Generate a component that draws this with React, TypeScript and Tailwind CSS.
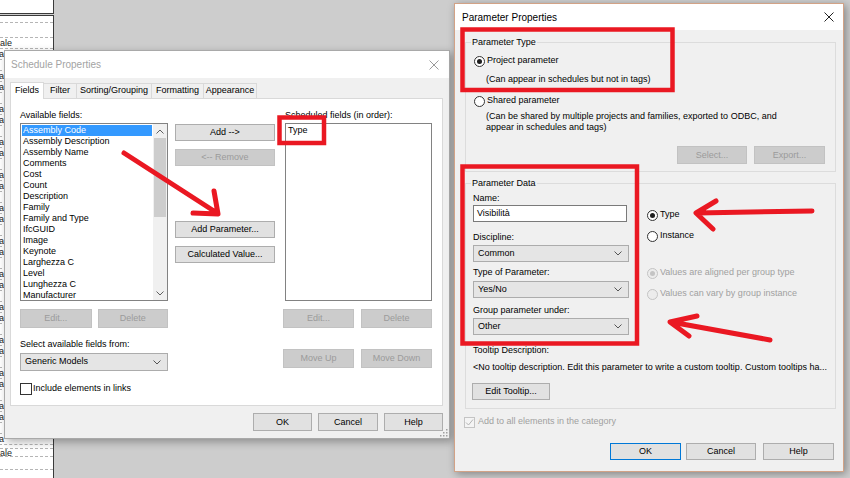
import React from "react";

const availableFields = [
  "Assembly Code",
  "Assembly Description",
  "Assembly Name",
  "Comments",
  "Cost",
  "Count",
  "Description",
  "Family",
  "Family and Type",
  "IfcGUID",
  "Image",
  "Keynote",
  "Larghezza C",
  "Level",
  "Lunghezza C",
  "Manufacturer",
];

const stripRows = Array.from({ length: 36 }, (_, i) => i);

function CloseIcon({ color }: { color: string }) {
  return (
    <svg width="10" height="10" viewBox="0 0 10 10">
      <path d="M0.5 0.5 L9.5 9.5 M9.5 0.5 L0.5 9.5" stroke={color} strokeWidth="1" fill="none" />
    </svg>
  );
}

function ChevronDown({ color = "#555" }: { color?: string }) {
  return (
    <svg width="8" height="5" viewBox="0 0 8 5">
      <path d="M0.5 0.5 L4 4 L7.5 0.5" fill="none" stroke={color} strokeWidth="1" />
    </svg>
  );
}

function ChevronUp({ color = "#555" }: { color?: string }) {
  return (
    <svg width="8" height="5" viewBox="0 0 8 5">
      <path d="M0.5 4.5 L4 1 L7.5 4.5" fill="none" stroke={color} strokeWidth="1" />
    </svg>
  );
}

function Btn({
  label,
  className = "",
  disabled = false,
  focused = false,
}: {
  label: string;
  className?: string;
  disabled?: boolean;
  focused?: boolean;
}) {
  const tone = disabled
    ? "bg-[#cccccc] border-[#c2c2c2] text-[#9b9b9b]"
    : focused
    ? "bg-[#e1e1e1] border-[#0078d7] text-black"
    : "bg-[#e1e1e1] border-[#adadad] text-black";
  return (
    <button type="button" className={`flex items-center justify-center border leading-none ${tone} ${className}`}>
      {label}
    </button>
  );
}

function Select({ value, className = "" }: { value: string; className?: string }) {
  return (
    <div className={`flex items-center justify-between border border-[#acacac] bg-[#e5e5e5] pl-[4px] pr-[6px] ${className}`}>
      <span>{value}</span>
      <ChevronDown />
    </div>
  );
}

function Radio({ checked = false, disabled = false }: { checked?: boolean; disabled?: boolean }) {
  return (
    <span
      className={`w-[11px] h-[11px] shrink-0 rounded-full border flex items-center justify-center ${
        disabled ? "border-[#c4c4c4] bg-[#ececec]" : "border-[#333333] bg-white"
      }`}
    >
      {checked && <span className={`w-[5px] h-[5px] rounded-full ${disabled ? "bg-[#c4c4c4]" : "bg-[#1e1e1e]"}`} />}
    </span>
  );
}

function RadioRow({
  label,
  checked = false,
  disabled = false,
  className = "",
}: {
  label: string;
  checked?: boolean;
  disabled?: boolean;
  className?: string;
}) {
  return (
    <div className={`h-[12px] flex items-center gap-[2px] whitespace-nowrap ${disabled ? "text-[#a0a0a0]" : "text-black"} ${className}`}>
      <Radio checked={checked} disabled={disabled} />
      <span>{label}</span>
    </div>
  );
}

function ScheduleDialog() {
  return (
    <div className="absolute left-[4px] top-[50px] w-[446px] h-[389px] flex flex-col border border-[#a9a9a9] bg-[#f0f0f0] shadow-[3px_3px_8px_rgba(0,0,0,0.3)]">
      <div className="h-[27px] shrink-0 bg-white flex items-center justify-between pl-[6px] pr-[10px]">
        <span className="text-[10px] text-[#a3a3a3]">Schedule Properties</span>
        <CloseIcon color="#9a9a9a" />
      </div>

      <div className="pt-[4px] pl-[5px] text-[9px] text-black">
        {/* Tabs */}
        <div className="flex items-start h-[16px]">
          <div className="relative z-10 h-[17px] w-[34px] bg-white border border-b-0 border-[#d9d9d9] flex items-center justify-center">
            Fields
          </div>
          <div className="mt-[1px] h-[15px] w-[34px] -ml-[1px] bg-[#f0f0f0] border border-b-0 border-[#d9d9d9] flex items-center justify-center">
            Filter
          </div>
          <div className="mt-[1px] h-[15px] w-[76px] -ml-[1px] bg-[#f0f0f0] border border-b-0 border-[#d9d9d9] flex items-center justify-center">
            Sorting/Grouping
          </div>
          <div className="mt-[1px] h-[15px] w-[53px] -ml-[1px] bg-[#f0f0f0] border border-b-0 border-[#d9d9d9] flex items-center justify-center">
            Formatting
          </div>
          <div className="mt-[1px] h-[15px] w-[54px] -ml-[1px] bg-[#f0f0f0] border border-b-0 border-[#d9d9d9] flex items-center justify-center">
            Appearance
          </div>
        </div>

        {/* Fields panel */}
        <div className="w-[433px] h-[308px] bg-white border border-[#d9d9d9] flex pt-[10px] pl-[9px]">
          {/* Available fields */}
          <div className="w-[148px] flex flex-col">
            <div className="h-[12px] leading-[12px]">Available fields:</div>
            <div className="mt-[2px] h-[178px] border border-[#828282] flex">
              <div className="flex-1 p-[1px] overflow-hidden">
                {availableFields.map((f, i) => (
                  <div
                    key={f}
                    className={`h-[11px] leading-[11px] pl-[1px] whitespace-nowrap ${i === 0 ? "bg-[#3399ff] text-white" : ""}`}
                  >
                    {f}
                  </div>
                ))}
              </div>
              <div className="w-[14px] bg-[#f0f0f0] flex flex-col items-center">
                <div className="h-[14px] flex items-center">
                  <ChevronUp color="#606060" />
                </div>
                <div className="w-[12px] h-[79px] bg-[#cdcdcd]" />
                <div className="flex-1" />
                <div className="h-[14px] flex items-center">
                  <ChevronDown color="#606060" />
                </div>
              </div>
            </div>
            <div className="mt-[8px] flex gap-[6px]">
              <Btn label="Edit..." disabled className="w-[72px] h-[19px]" />
              <Btn label="Delete" disabled className="w-[71px] h-[19px]" />
            </div>
            <div className="mt-[10px] h-[12px] leading-[12px]">Select available fields from:</div>
            <Select value="Generic Models" className="mt-[3px] h-[18px] w-[148px]" />
            <div className="mt-[12px] h-[12px] flex items-center gap-[1px]">
              <span className="w-[12px] h-[12px] border border-[#333333] bg-white" />
              <span>Include elements in links</span>
            </div>
          </div>

          {/* Add / remove buttons */}
          <div className="ml-[7px] w-[100px] flex flex-col">
            <Btn label="Add -->" className="mt-[15px] h-[17px] w-[100px]" />
            <Btn label="<-- Remove" disabled className="mt-[8px] h-[17px] w-[100px]" />
            <Btn label="Add Parameter..." className="mt-[55px] h-[17px] w-[100px]" />
            <Btn label="Calculated Value..." className="mt-[8px] h-[17px] w-[100px]" />
          </div>

          {/* Scheduled fields */}
          <div className="ml-[10px] w-[147px] flex flex-col">
            <div className="h-[12px] leading-[12px] whitespace-nowrap">Scheduled fields (in order):</div>
            <div className="mt-[2px] h-[178px] border border-[#828282] p-[1px]">
              <div className="h-[11px] leading-[11px] pl-[1px]">Type</div>
            </div>
            <div className="mt-[8px] -ml-[2px] flex gap-[7px]">
              <Btn label="Edit..." disabled className="w-[71px] h-[19px]" />
              <Btn label="Delete" disabled className="w-[71px] h-[19px]" />
            </div>
            <div className="mt-[21px] -ml-[2px] flex gap-[7px]">
              <Btn label="Move Up" disabled className="w-[71px] h-[19px]" />
              <Btn label="Move Down" disabled className="w-[71px] h-[19px]" />
            </div>
          </div>
        </div>

        {/* Dialog buttons */}
        <div className="mt-[7px] w-[433px] flex justify-end gap-[6px]">
          <Btn label="OK" className="w-[59px] h-[18px]" />
          <Btn label="Cancel" className="w-[60px] h-[18px]" />
          <Btn label="Help" className="w-[59px] h-[18px]" />
        </div>
      </div>

      {/* resize grip */}
      <svg className="absolute right-[1px] bottom-[1px]" width="8" height="8" viewBox="0 0 8 8">
        <g fill="#a0a0a0">
          <rect x="6" y="0" width="1.5" height="1.5" />
          <rect x="3" y="3" width="1.5" height="1.5" />
          <rect x="6" y="3" width="1.5" height="1.5" />
          <rect x="0" y="6" width="1.5" height="1.5" />
          <rect x="3" y="6" width="1.5" height="1.5" />
          <rect x="6" y="6" width="1.5" height="1.5" />
        </g>
      </svg>
    </div>
  );
}

function ParameterDialog() {
  return (
    <div className="absolute left-[454px] top-[3px] w-[390px] h-[469px] flex flex-col border border-[#d2a286] bg-[#f0f0f0] shadow-[2px_2px_8px_rgba(0,0,0,0.35)]">
      <div className="h-[26px] shrink-0 bg-white flex items-center justify-between pl-[7px] pr-[9px]">
        <span className="text-[10px] text-black">Parameter Properties</span>
        <CloseIcon color="#222222" />
      </div>

      <div className="pl-[10px] text-[9px] text-black">
        {/* Parameter Type */}
        <div className="relative mt-[12px] w-[371px] border border-[#dcdcdc] pl-[8px] pb-[7px]">
          <span className="absolute -top-[7px] left-[5px] px-[1px] bg-[#f0f0f0] leading-[12px]">Parameter Type</span>
          <RadioRow label="Project parameter" checked className="mt-[12px]" />
          <div className="mt-[6px] h-[12px] leading-[12px] pl-[12px]">(Can appear in schedules but not in tags)</div>
          <RadioRow label="Shared parameter" className="mt-[10px]" />
          <div className="mt-[4px] leading-[11px] pl-[12px]">
            <div>(Can be shared by multiple projects and families, exported to ODBC, and</div>
            <div>appear in schedules and tags)</div>
          </div>
          <div className="mt-[13px] flex justify-end pr-[10px] gap-[7px]">
            <Btn label="Select..." disabled className="w-[70px] h-[18px]" />
            <Btn label="Export..." disabled className="w-[71px] h-[18px]" />
          </div>
        </div>

        {/* Parameter Data */}
        <div className="relative mt-[11px] w-[371px] border border-[#dcdcdc] pl-[7px] pb-[8px]">
          <span className="absolute -top-[7px] left-[5px] px-[1px] bg-[#f0f0f0] leading-[12px]">Parameter Data</span>
          <div className="flex">
            <div className="w-[157px] flex flex-col">
              <div className="mt-[8px] h-[12px] leading-[12px]">Name:</div>
              <div className="mt-[1px] h-[17px] w-[154px] border border-[#7a7a7a] bg-white pl-[3px] flex items-center">
                Visibilità
              </div>
              <div className="mt-[9px] h-[12px] leading-[12px]">Discipline:</div>
              <Select value="Common" className="mt-[2px] h-[17px] w-[156px]" />
              <div className="mt-[4px] h-[12px] leading-[12px]">Type of Parameter:</div>
              <Select value="Yes/No" className="mt-[3px] h-[17px] w-[156px]" />
              <div className="mt-[6px] h-[12px] leading-[12px]">Group parameter under:</div>
              <Select value="Other" className="mt-[2px] h-[17px] w-[156px]" />
            </div>
            <div className="ml-[17px] flex flex-col">
              <RadioRow label="Type" checked className="mt-[25px]" />
              <RadioRow label="Instance" className="mt-[9px]" />
              <RadioRow label="Values are aligned per group type" checked disabled className="mt-[25px]" />
              <RadioRow label="Values can vary by group instance" disabled className="mt-[9px]" />
            </div>
          </div>
          <div className="mt-[9px] h-[12px] leading-[12px]">Tooltip Description:</div>
          <div className="mt-[5px] h-[12px] leading-[12px] whitespace-nowrap">
            &lt;No tooltip description. Edit this parameter to write a custom tooltip. Custom tooltips ha...
          </div>
          <Btn label="Edit Tooltip..." className="mt-[10px] -ml-[1px] w-[78px] h-[17px]" />
        </div>

        <div className="mt-[7px] -ml-[1px] h-[12px] flex items-center gap-[3px] text-[#a0a0a0]">
          <span className="w-[11px] h-[11px] border border-[#c4c4c4] bg-[#f4f4f4] flex items-center justify-center">
            <svg width="9" height="9" viewBox="0 0 9 9">
              <path d="M1 4.5 L3.5 7 L8 1.5" fill="none" stroke="#b4b4b4" strokeWidth="1" />
            </svg>
          </span>
          <span>Add to all elements in the category</span>
        </div>

        <div className="mt-[15px] w-[369px] flex justify-end">
          <Btn label="OK" focused className="w-[71px] h-[17px]" />
          <Btn label="Cancel" className="ml-[5px] w-[70px] h-[17px]" />
          <Btn label="Help" className="ml-[7px] w-[71px] h-[17px]" />
        </div>
      </div>
    </div>
  );
}

function ScheduleStrip() {
  return (
    <div className="absolute left-0 top-0 w-[54px] h-[478px] flex flex-col text-[9px] text-[#1a1a1a]">
      <div className="h-[14px] bg-white border-r border-b border-[#3a3a3a]" />
      <div className="mt-[1px] flex-1 bg-white border-t border-r border-[#3a3a3a] flex flex-col">
        <div className="h-[7px] border-b border-dashed border-[#b5b5b5]" />
        <div className="h-[15px] border-b border-dashed border-[#b5b5b5]" />
        <div className="h-[11px] leading-[11px] border-b border-dashed border-[#b5b5b5]">ale</div>
        {stripRows.map((r) => (
          <div key={r} className="h-[11px] leading-[11px] border-b border-dashed border-[#b5b5b5] -ml-[1px]">
            {r % 3 === 1 ? "" : "a"}
          </div>
        ))}
        <div className="h-[3px]" />
        <div className="h-[9px] leading-[9px] border-t border-b border-dashed border-[#b5b5b5]">ale</div>
        <div className="h-[13px] border-b border-dashed border-[#b5b5b5]" />
      </div>
    </div>
  );
}

export default function App() {
  return (
    <div className="relative w-[850px] h-[478px] overflow-hidden bg-[#cdcdcd] [font-family:'Liberation_Sans',Arial,sans-serif]">
      <ScheduleStrip />
      <ScheduleDialog />
      <ParameterDialog />

      {/* red annotations */}
      <svg className="absolute inset-0 pointer-events-none" width="850" height="478" viewBox="0 0 850 478">
        <g fill="none" stroke="#ea1822" strokeWidth="4.5">
          <rect x="279.5" y="117.5" width="44.5" height="25.5" />
          <rect x="462.5" y="29.5" width="210" height="60.5" />
          <rect x="462.5" y="166.5" width="174.5" height="177" />
        </g>
        <g fill="none" stroke="#ea1822" strokeWidth="5" strokeLinecap="round" strokeLinejoin="round">
          <path d="M124 153 L217 213 M214 191 L218 214 L193 213" />
          <path d="M812 211 L697 213 M716 201 L696 213 L713 229" />
          <path d="M770 340 L671 322 M697 316 L670 322 L689 336" />
        </g>
      </svg>
    </div>
  );
}
